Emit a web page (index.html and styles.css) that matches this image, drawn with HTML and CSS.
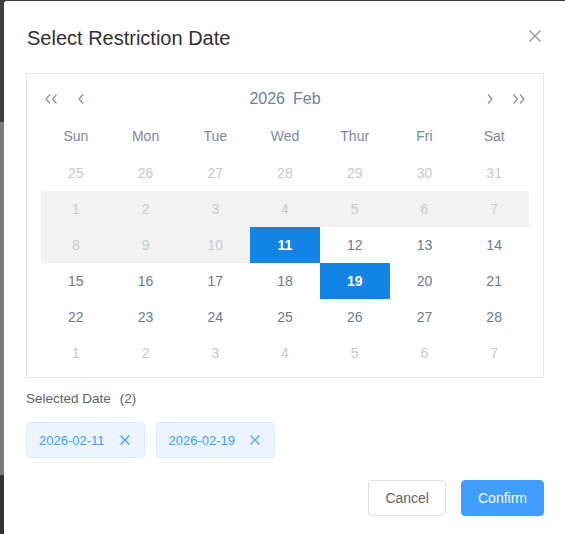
FILE: index.html
```html
<!DOCTYPE html>
<html lang="en">
<head>
<meta charset="utf-8">
<title>Select Restriction Date</title>
<link rel="stylesheet" href="styles.css">
</head>
<body>
<div class="page">
  <div class="dialog">
    <header class="dialog-header">
      <h2 class="dialog-title">Select Restriction Date</h2>
      <button class="dialog-close" aria-label="Close">
        <svg width="12" height="12" viewBox="0 0 12 12"><path d="M0.5 0.5 L11.5 11.5 M11.5 0.5 L0.5 11.5" /></svg>
      </button>
    </header>

    <div class="calendar">
      <div class="cal-head">
        <div class="cal-nav">
          <svg class="nav-icon" width="13" height="10" viewBox="0 0 13 10"><path d="M5 0.5 L1 5 L5 9.5 M11.5 0.5 L7.5 5 L11.5 9.5"/></svg>
          <svg class="nav-icon nav-single-left" width="6" height="10" viewBox="0 0 6 10"><path d="M5 0.5 L1 5 L5 9.5"/></svg>
        </div>
        <div class="cal-title"><span>2026</span><span>Feb</span></div>
        <div class="cal-nav cal-nav-right">
          <svg class="nav-icon nav-single-right" width="6" height="10" viewBox="0 0 6 10"><path d="M1 0.5 L5 5 L1 9.5"/></svg>
          <svg class="nav-icon" width="13" height="10" viewBox="0 0 13 10"><path d="M1.5 0.5 L5.5 5 L1.5 9.5 M8 0.5 L12 5 L8 9.5"/></svg>
        </div>
      </div>

      <div class="weekdays">
        <span>Sun</span><span>Mon</span><span>Tue</span><span>Wed</span><span>Thur</span><span>Fri</span><span>Sat</span>
      </div>

      <div class="days">
        <span class="day other">25</span><span class="day other">26</span><span class="day other">27</span><span class="day other">28</span><span class="day other">29</span><span class="day other">30</span><span class="day other">31</span>

        <span class="day disabled">1</span><span class="day disabled">2</span><span class="day disabled">3</span><span class="day disabled">4</span><span class="day disabled">5</span><span class="day disabled">6</span><span class="day disabled">7</span>

        <span class="day disabled">8</span><span class="day disabled">9</span><span class="day disabled">10</span><span class="day selected">11</span><span class="day">12</span><span class="day">13</span><span class="day">14</span>

        <span class="day">15</span><span class="day">16</span><span class="day">17</span><span class="day">18</span><span class="day selected">19</span><span class="day">20</span><span class="day">21</span>

        <span class="day">22</span><span class="day">23</span><span class="day">24</span><span class="day">25</span><span class="day">26</span><span class="day">27</span><span class="day">28</span>

        <span class="day other">1</span><span class="day other">2</span><span class="day other">3</span><span class="day other">4</span><span class="day other">5</span><span class="day other">6</span><span class="day other">7</span>
      </div>
    </div>

    <div class="selected-label">Selected Date<span class="count">(2)</span></div>

    <div class="tags">
      <span class="tag">2026-02-11<svg class="tag-close" width="10" height="10" viewBox="0 0 10 10"><path d="M0.5 0.5 L9.5 9.5 M9.5 0.5 L0.5 9.5"/></svg></span>
      <span class="tag">2026-02-19<svg class="tag-close" width="10" height="10" viewBox="0 0 10 10"><path d="M0.5 0.5 L9.5 9.5 M9.5 0.5 L0.5 9.5"/></svg></span>
    </div>

    <footer class="dialog-footer">
      <button class="btn btn-default">Cancel</button>
      <button class="btn btn-primary">Confirm</button>
    </footer>
  </div>
</div>
</body>
</html>
```

FILE: styles.css
```css
* {
  box-sizing: border-box;
}

html, body {
  margin: 0;
  padding: 0;
}

body {
  font-family: "Liberation Sans", Arial, "Noto Sans", sans-serif;
  background: linear-gradient(to bottom, #3e3e3e 0 122px, #7c7c7c 122px 475px, #343434 475px);
  height: 534px;
  overflow: hidden;
}

.page {
  display: flex;
  height: 534px;
  padding: 1px 0 0 4px;
}

.dialog {
  position: relative;
  flex: 1;
  background: #ffffff;
  border-top-left-radius: 3px;
  padding: 24px 21px 0 22px;
}

.dialog-header {
  display: flex;
  align-items: center;
  padding-left: 1px;
}

.dialog-title {
  margin: 0;
  font-size: 20px;
  line-height: 26px;
  font-weight: 400;
  color: #303133;
}

.dialog-close {
  position: absolute;
  top: 29px;
  right: 24px;
  width: 12px;
  height: 12px;
  padding: 0;
  border: 0;
  background: transparent;
  display: flex;
}

.dialog-close svg path {
  stroke: #909399;
  stroke-width: 1.3;
  fill: none;
}

.calendar {
  margin-top: 22px;
  border: 1px solid #e4e7ed;
  padding: 7px 14px 6px;
}

.cal-head {
  display: flex;
  align-items: center;
  height: 36px;
  padding: 0 4px;
}

.cal-nav {
  display: flex;
  align-items: center;
  width: 40px;
}

.cal-nav-right {
  justify-content: flex-end;
}

.nav-icon path {
  stroke: #8592a8;
  stroke-width: 1.2;
  fill: none;
}

.nav-single-left {
  margin-left: 20px;
}

.nav-single-right {
  margin-right: 19px;
}

.cal-title {
  flex: 1;
  display: flex;
  justify-content: center;
  gap: 8px;
  font-size: 16px;
  color: #6f7f99;
}

.weekdays {
  display: grid;
  grid-template-columns: repeat(7, 1fr);
  height: 38px;
  align-items: center;
  text-align: center;
  font-size: 14px;
  color: #7a8aa3;
}

.days {
  display: grid;
  grid-template-columns: repeat(7, 1fr);
  grid-auto-rows: 36px;
}

.day {
  display: flex;
  align-items: center;
  justify-content: center;
  font-size: 14px;
  color: #6a7a93;
}

.day.other {
  color: #c6c9cf;
}

.day.disabled {
  background: #f2f2f2;
  color: #c6c9cf;
}

.day.selected {
  background: #1483e6;
  color: #ffffff;
  font-weight: 700;
}

.selected-label {
  margin-top: 11px;
  font-size: 13.5px;
  line-height: 20px;
  color: #606266;
}

.count {
  margin-left: 9px;
}

.tags {
  display: flex;
  gap: 11px;
  margin-top: 13px;
}

.tag {
  display: inline-flex;
  align-items: center;
  height: 36px;
  padding: 0 14px 0 12px;
  background: #ecf5ff;
  border: 1px solid #d9ecff;
  border-radius: 4px;
  font-size: 13px;
  color: #409eff;
}

.tag-close {
  margin-left: 15px;
}

.tag-close path {
  stroke: #409eff;
  stroke-width: 1.2;
  fill: none;
}

.dialog-footer {
  display: flex;
  justify-content: flex-end;
  gap: 15px;
  margin-top: 22px;
}

.btn {
  height: 36px;
  padding: 0 16px;
  border-radius: 4px;
  font-family: inherit;
  font-size: 14px;
  border: 1px solid #dcdfe6;
  background: #ffffff;
  color: #606266;
}

.btn-primary {
  background: #409eff;
  border-color: #409eff;
  color: #ffffff;
}
```
